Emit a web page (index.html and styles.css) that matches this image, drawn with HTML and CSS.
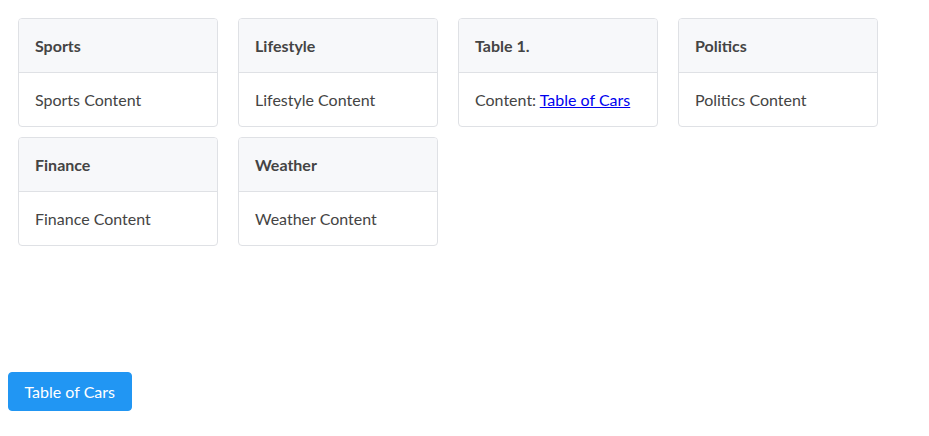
FILE: index.html
```html
<!DOCTYPE html>
<html>
<head>
<meta charset="utf-8">
<link rel="stylesheet" href="styles.css">
</head>
<body>
<div class="cards">
  <div class="card"><div class="card-header">Sports</div><div class="card-body">Sports Content</div></div>
  <div class="card"><div class="card-header">Lifestyle</div><div class="card-body">Lifestyle Content</div></div>
  <div class="card"><div class="card-header">Table 1.</div><div class="card-body">Content: <a href="#">Table of Cars</a></div></div>
  <div class="card"><div class="card-header">Politics</div><div class="card-body">Politics Content</div></div>
  <div class="card"><div class="card-header">Finance</div><div class="card-body">Finance Content</div></div>
  <div class="card"><div class="card-header">Weather</div><div class="card-body">Weather Content</div></div>
</div>
<button class="btn">Table of Cars</button>
</body>
</html>
```
FILE: styles.css
```css
body {
  margin: 8px;
  font-family: "Lato", "Open Sans", sans-serif;
  font-size: 16px;
  color: #444;
}
.cards {
  display: grid;
  grid-template-columns: repeat(4, 200px);
  column-gap: 20px;
  row-gap: 10px;
  padding: 10px;
}
.card {
  border: 1px solid #dfe1e5;
  border-radius: 4px;
  background: #fff;
  overflow: hidden;
}
.card-header {
  background: #f7f8fa;
  border-bottom: 1px solid #dfe1e5;
  padding: 14.5px 16px;
  line-height: 24px;
  font-weight: 700;
}
.card-body {
  padding: 14.5px 16px;
  line-height: 24px;
}
.card-body a {
  color: #0000ee;
}
.btn {
  margin-top: 116px;
  display: block;
  background: #2196f3;
  color: #fff;
  border: 1px solid #2196f3;
  border-radius: 4px;
  font-family: inherit;
  font-size: 16px;
  line-height: 24px;
  padding: 6.5px 15.5px;
  white-space: nowrap;
  cursor: pointer;
}
```
